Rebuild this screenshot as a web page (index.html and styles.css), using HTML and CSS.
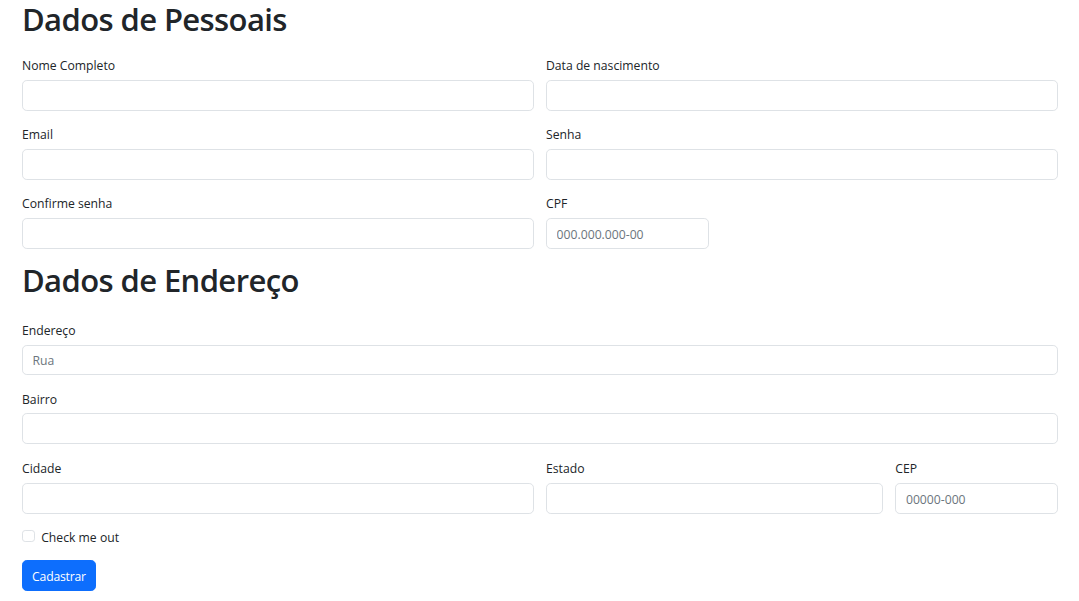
FILE: index.html
```html
<!DOCTYPE html>
<html lang="pt-BR">
<head>
<meta charset="utf-8">
<title>Cadastro</title>
<link rel="stylesheet" href="styles.css">
</head>
<body>
<main class="page">
  <form class="form">
    <h1 class="title">Dados de Pessoais</h1>
    <div class="grid">
      <div class="field span-6">
        <label class="label">Nome Completo</label>
        <input class="input" type="text">
      </div>
      <div class="field span-6">
        <label class="label">Data de nascimento</label>
        <input class="input" type="text">
      </div>
      <div class="field span-6">
        <label class="label">Email</label>
        <input class="input" type="text">
      </div>
      <div class="field span-6">
        <label class="label">Senha</label>
        <input class="input" type="text">
      </div>
      <div class="field span-6">
        <label class="label">Confirme senha</label>
        <input class="input" type="text">
      </div>
      <div class="field span-2">
        <label class="label">CPF</label>
        <input class="input" type="text" placeholder="000.000.000-00">
      </div>
    </div>
    <h1 class="title second">Dados de Endereço</h1>
    <div class="grid">
      <div class="field span-12">
        <label class="label">Endereço</label>
        <input class="input" type="text" placeholder="Rua">
      </div>
      <div class="field span-12">
        <label class="label">Bairro</label>
        <input class="input" type="text">
      </div>
    </div>
    <div class="grid last-row">
      <div class="field span-6">
        <label class="label">Cidade</label>
        <input class="input" type="text">
      </div>
      <div class="field span-4">
        <label class="label">Estado</label>
        <input class="input" type="text">
      </div>
      <div class="field span-2">
        <label class="label">CEP</label>
        <input class="input" type="text" placeholder="00000-000">
      </div>
    </div>
    <div class="check">
      <span class="box"></span>
      <label class="check-label">Check me out</label>
    </div>
    <button class="btn" type="button">Cadastrar</button>
  </form>
</main>
</body>
</html>
```

FILE: styles.css
```css
* { box-sizing: border-box; }
html, body { margin: 0; padding: 0; background: #fff; }
body {
  font-family: "Open Sans", "Noto Sans", "DejaVu Sans", sans-serif;
  color: #212529;
  font-size: 12.2px;
  line-height: 19.2px;
}
.page { padding: 0 21px 0 22px; }
.form { display: flex; flex-direction: column; }
.title {
  margin: 0 0 16px 0;
  font-size: 31px;
  font-weight: 600;
  line-height: 38.4px;
  letter-spacing: -0.6px;
  color: #212529;
}
.title.second { margin-top: 0; margin-bottom: 19px; }
.grid {
  display: grid;
  grid-template-columns: repeat(12, minmax(0, 1fr));
  column-gap: 12px;
}
.last-row { margin-top: 0.8px; }
.field { display: flex; flex-direction: column; margin-bottom: 12.8px; }
.span-12 { grid-column: span 12; }
.span-6 { grid-column: span 6; }
.span-4 { grid-column: span 4; }
.span-2 { grid-column: span 2; }
.label {
  display: block;
  flex: none;
  height: 21.2px;
  padding-top: 2px;
  margin-bottom: 4.6px;
}
.input {
  display: block;
  flex: none;
  width: 100%;
  height: 30.4px;
  padding: 5.6px 9.6px 4px;
  border: 1px solid #dee2e6;
  border-radius: 4.8px;
  font: inherit;
  color: #212529;
  background: #fff;
  outline: none;
}
.input::placeholder { color: #6c757d; opacity: 1; }
.check {
  display: flex;
  align-items: center;
  height: 19.2px;
  margin-bottom: 14.6px;
}
.box {
  width: 12.8px;
  height: 12.8px;
  border: 1px solid #dee2e6;
  border-radius: 3.2px;
  background: #fff;
  margin-right: 6.4px;
}
.check-label { display: block; position: relative; top: 1.5px; }
.btn {
  align-self: flex-start;
  height: 30.4px;
  width: 74px;
  padding: 5.6px 0 4px;
  border: 1px solid #0d6efd;
  border-radius: 4.8px;
  background: #0d6efd;
  color: #fff;
  font: inherit;
  letter-spacing: -0.2px;
  text-align: center;
}
```
